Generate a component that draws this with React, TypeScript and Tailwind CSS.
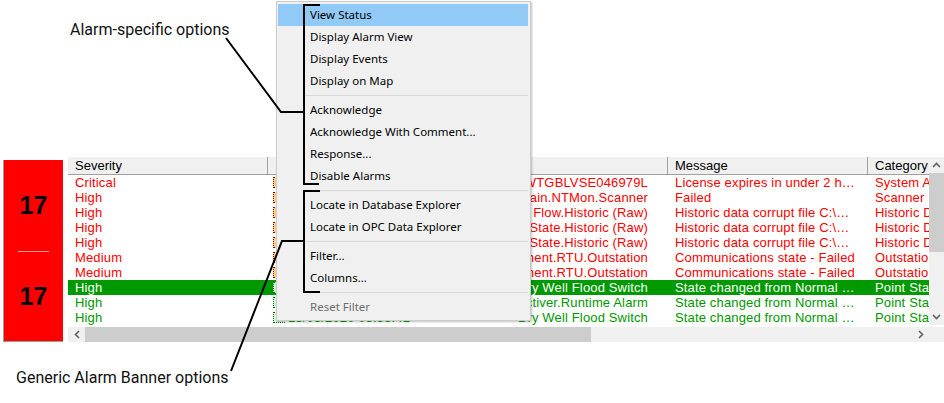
type Tone = 'red' | 'green' | 'selected';

type AlarmRow = {
  severity: string;
  time: string;
  source: string;
  message: string;
  category: string;
  tone: Tone;
};

const ROWS: AlarmRow[] = [
  { severity: 'Critical', time: '13/05/2020 09:12:44', source: 'Srv.WTGBLVSE046979L', message: 'License expires in under 2 hours', category: 'System Alarm', tone: 'red' },
  { severity: 'High', time: '13/05/2020 09:10:02', source: 'Domain.NTMon.Scanner', message: 'Failed', category: 'Scanner', tone: 'red' },
  { severity: 'High', time: '13/05/2020 09:08:51', source: 'Well Flow.Historic (Raw)', message: 'Historic data corrupt file C:\\ProgramData\\Historic', category: 'Historic Data', tone: 'red' },
  { severity: 'High', time: '13/05/2020 09:08:51', source: 'Pump State.Historic (Raw)', message: 'Historic data corrupt file C:\\ProgramData\\Historic', category: 'Historic Data', tone: 'red' },
  { severity: 'High', time: '13/05/2020 09:08:50', source: 'Valve State.Historic (Raw)', message: 'Historic data corrupt file C:\\ProgramData\\Historic', category: 'Historic Data', tone: 'red' },
  { severity: 'Medium', time: '13/05/2020 09:05:17', source: 'Equipment.RTU.Outstation', message: 'Communications state - Failed', category: 'Outstation', tone: 'red' },
  { severity: 'Medium', time: '13/05/2020 09:05:16', source: 'Equipment.RTU.Outstation', message: 'Communications state - Failed', category: 'Outstation', tone: 'red' },
  { severity: 'High', time: '13/05/2020 09:01:33', source: 'Dry Well Flood Switch', message: 'State changed from Normal to Alarm', category: 'Point State', tone: 'selected' },
  { severity: 'High', time: '13/05/2020 08:58:09', source: 'Activer.Runtime Alarm', message: 'State changed from Normal to Alarm', category: 'Point State', tone: 'green' },
  { severity: 'High', time: '13/05/2020 08:55:41', source: 'Dry Well Flood Switch', message: 'State changed from Normal to Alarm', category: 'Point State', tone: 'green' },
];

const COLUMNS = [
  { name: 'Severity', pad: 'pl-[7px]' },
  { name: 'Time', pad: 'pl-[24px]' },
  { name: 'Source', pad: 'pl-[7px]' },
  { name: 'Message', pad: 'pl-[7px]' },
  { name: 'Category', pad: 'pl-[7px]' },
];

const toneClass: Record<Tone, string> = {
  red: 'text-[#ff0000]',
  green: 'text-[#009900]',
  selected: 'bg-[#009900] text-white',
};

function Chevron({ dir }: { dir: 'up' | 'down' | 'left' | 'right' }) {
  const horizontal = dir === 'left' || dir === 'right';
  const points = {
    up: '1,5 4.5,1.5 8,5',
    down: '1,1 4.5,4.5 8,1',
    left: '5,1 1.5,4.5 5,8',
    right: '1,1 4.5,4.5 1,8',
  }[dir];
  return (
    <svg width={horizontal ? 6 : 9} height={horizontal ? 9 : 6} viewBox={horizontal ? '0 0 6 9' : '0 0 9 6'}>
      <polyline points={points} fill="none" stroke="#606060" strokeWidth="1.6" />
    </svg>
  );
}

function Banner() {
  return (
    <div className="mt-[3px] flex h-[182px] w-[60px] shrink-0 flex-col border-b border-l border-[#9b9b9b] bg-[#ff0000] font-['Liberation_Sans',Arial,sans-serif] text-[25px] font-bold text-black">
      <div className="flex flex-1 items-center justify-center pt-[1px]">17</div>
      <div className="ml-[14px] h-px w-[31px] bg-[#ff9d9d]" />
      <div className="flex flex-1 items-center justify-center">17</div>
    </div>
  );
}

function AckIcon({ tone }: { tone: Tone }) {
  const cls =
    tone === 'red'
      ? 'border-[#990000] bg-[#ffd27f]'
      : 'border-[#007700] bg-[#d9f5d9]';
  return <span className={`mt-[2px] h-[11px] w-[12px] shrink-0 border border-dotted ${cls}`} />;
}

function AlarmTable() {
  return (
    <div className="flex h-[185px] w-[876px] shrink-0 flex-col bg-white font-['Liberation_Sans',Arial,sans-serif] text-[13px]">
      <div className="flex h-[170px]">
        <div className="flex w-[861px] flex-col overflow-hidden">
          <div className="flex h-[18px] shrink-0 border-b border-[#a0a0a0] bg-[#f0f0f0]">
            {COLUMNS.map((c) => (
              <div key={c.name} className={`w-[200px] shrink-0 border-r border-[#a0a0a0] leading-[17px] text-black ${c.pad}`}>
                {c.name}
              </div>
            ))}
          </div>
          {ROWS.map((r, i) => (
            <div key={i} className={`flex h-[15px] shrink-0 leading-[15px] tracking-[0.15px] ${toneClass[r.tone]}`}>
              <div className="w-[200px] shrink-0 pl-[7px]">{r.severity}</div>
              <div className="flex w-[200px] shrink-0 gap-[3px] pl-[5px]">
                <AckIcon tone={r.tone} />
                <span className="whitespace-nowrap">{r.time}</span>
              </div>
              <div className="flex w-[200px] shrink-0 justify-end overflow-hidden pr-[20px]">
                <span className="whitespace-nowrap">{r.source}</span>
              </div>
              <div className="w-[200px] shrink-0 truncate pl-[7px] pr-[10px]">{r.message}</div>
              <div className="w-[200px] shrink-0 whitespace-nowrap pl-[7px]">{r.category}</div>
            </div>
          ))}
        </div>
        <div className="flex w-[15px] shrink-0 flex-col bg-[#f0f0f0]">
          <div className="flex h-[16px] items-center justify-center">
            <Chevron dir="up" />
          </div>
          <div className="h-[79px] bg-[#cdcdcd]" />
          <div className="flex-1" />
          <div className="flex h-[17px] items-center justify-center">
            <Chevron dir="down" />
          </div>
        </div>
      </div>
      <div className="mt-[2px] flex h-[15px]">
        <div className="flex w-[17px] items-center justify-center bg-[#f0f0f0]">
          <Chevron dir="left" />
        </div>
        <div className="w-[506px] bg-[#cdcdcd]" />
        <div className="flex-1 bg-[#f0f0f0]" />
        <div className="flex w-[17px] items-center justify-center bg-[#f0f0f0]">
          <Chevron dir="right" />
        </div>
        <div className="w-[15px] bg-[#f0f0f0]" />
      </div>
    </div>
  );
}

type MenuEntry = { label: string; active?: boolean; disabled?: boolean } | 'sep';

const MENU: MenuEntry[] = [
  { label: 'View Status', active: true },
  { label: 'Display Alarm View' },
  { label: 'Display Events' },
  { label: 'Display on Map' },
  'sep',
  { label: 'Acknowledge' },
  { label: 'Acknowledge With Comment...' },
  { label: 'Response...' },
  { label: 'Disable Alarms' },
  'sep',
  { label: 'Locate in Database Explorer' },
  { label: 'Locate in OPC Data Explorer' },
  'sep',
  { label: 'Filter...' },
  { label: 'Columns...' },
  'sep',
  { label: 'Reset Filter', disabled: true },
];

function ContextMenu() {
  return (
    <div className="absolute left-[276px] top-[1px] h-[320px] w-[255px] border border-[#cccccc] bg-[#f0f0f0] pl-[1px] pr-[2px] pt-[2px] font-['Noto_Sans',sans-serif] text-[11.5px] shadow-[1px_1px_2px_rgba(0,0,0,0.25)]">
      {MENU.map((m, i) =>
        m === 'sep' ? (
          <div key={i} className="flex h-[7px] items-center pl-[27px]">
            <div className="h-px flex-1 bg-[#d7d7d7]" />
          </div>
        ) : (
          <div
            key={i}
            className={`h-[22px] whitespace-nowrap pl-[32px] leading-[22px] ${m.active ? 'bg-[#91c9f7]' : ''} ${m.disabled ? 'text-[#6d6d6d]' : 'text-black'}`}
          >
            {m.label}
          </div>
        )
      )}
    </div>
  );
}

function Callouts() {
  return (
    <svg className="pointer-events-none absolute left-0 top-0" width="944" height="403" viewBox="0 0 944 403">
      <g fill="none" stroke="#000" strokeWidth="2" strokeLinejoin="miter">
        <polyline points="320,5 304,5 304,184 319,184" />
        <polyline points="226,38 281,112 304,112" />
        <polyline points="320,191 304,191 304,292 320,292" />
        <polyline points="304,241 282,241 231,371" />
      </g>
    </svg>
  );
}

export default function App() {
  return (
    <div className="relative h-[403px] w-[944px] overflow-hidden bg-white">
      <div className="h-[157px] pl-[70px] pt-[17px]">
        <span className="font-['Roboto',sans-serif] text-[16px] leading-[19px] text-[#111]">Alarm-specific options</span>
      </div>
      <div className="flex gap-[5px] pl-[3px]">
        <Banner />
        <AlarmTable />
      </div>
      <div className="pl-[16px] pt-[23px]">
        <span className="font-['Roboto',sans-serif] text-[16px] leading-[19px] text-[#111]">Generic Alarm Banner options</span>
      </div>
      <ContextMenu />
      <Callouts />
    </div>
  );
}
